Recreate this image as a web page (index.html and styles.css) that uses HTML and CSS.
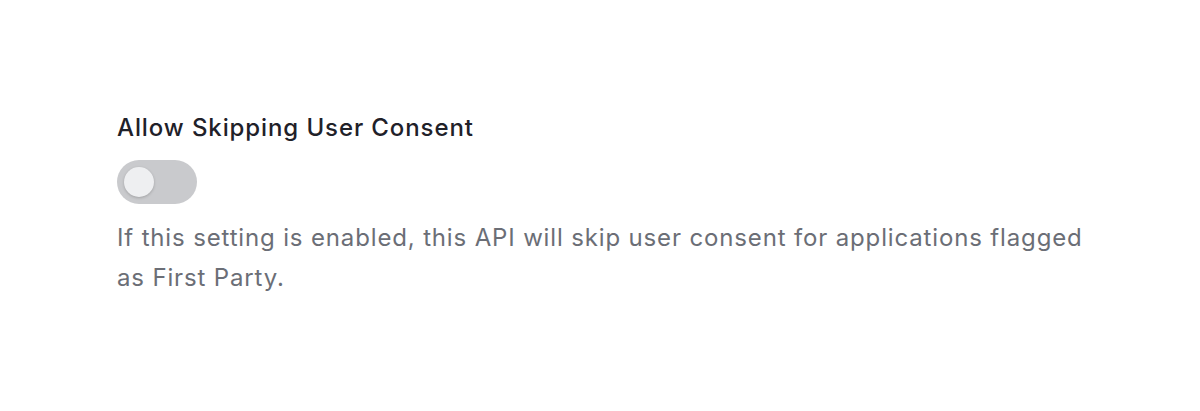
FILE: index.html
```html
<!DOCTYPE html>
<html lang="en">
<head>
    <meta charset="UTF-8">
    <title>API Settings</title>
    <link rel="stylesheet" href="styles.css">
</head>
<body>
    <div class="setting">
        <label class="setting-label" for="skipConsent">Allow Skipping User Consent</label>
        <label class="switch">
            <input type="checkbox" id="skipConsent">
            <span class="switch-track"></span>
        </label>
        <p class="setting-help">If this setting is enabled, this API will skip user consent for applications flagged as First Party.</p>
    </div>
</body>
</html>
```

FILE: styles.css
```css
* {
    margin: 0;
    padding: 0;
    box-sizing: border-box;
}

body {
    font-family: Inter, 'Noto Sans', sans-serif;
    background: #ffffff;
    padding: 112px 100px 0 117px;
}

.setting {
    display: flex;
    flex-direction: column;
    align-items: flex-start;
    max-width: 990px;
}

.setting-label {
    font-size: 24px;
    font-weight: 500;
    line-height: 32px;
    letter-spacing: 0.9px;
    color: #1f2129;
}

.switch {
    position: relative;
    display: inline-block;
    width: 80px;
    height: 44px;
    margin-top: 16px;
    cursor: pointer;
}

.switch input {
    display: none;
}

.switch-track {
    display: block;
    width: 100%;
    height: 100%;
    background: #c9cacd;
    border-radius: 22px;
}

/* knob sits on top of the track */
.switch-track::after {
    content: "";
    position: absolute;
    top: 7px;
    left: 7px;
    width: 30px;
    height: 30px;
    border-radius: 50%;
    background: #eeeff1;
    box-shadow: 0 1px 3px rgba(0, 0, 0, 0.2);
}

.setting-help {
    margin-top: 14px;
    font-size: 24px;
    line-height: 40px;
    letter-spacing: 0.85px;
    color: #6b6e76;
}
```
